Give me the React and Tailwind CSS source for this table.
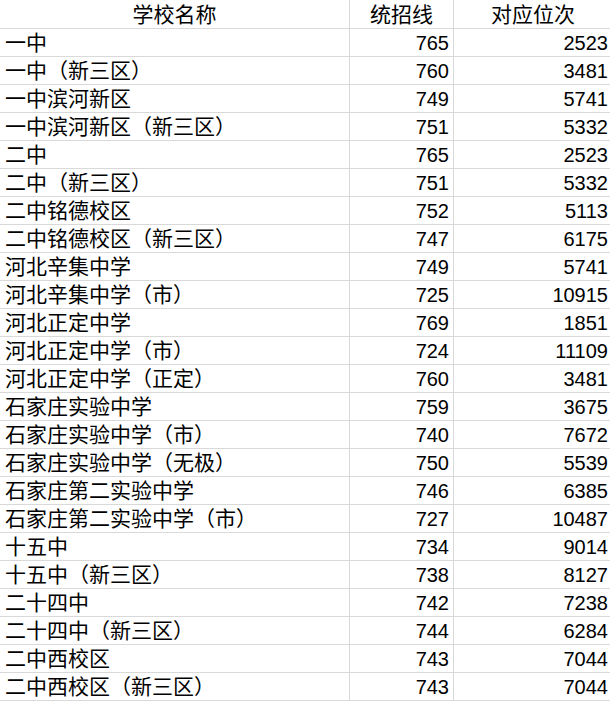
const rows = [
  ["一中", 765, 2523],
  ["一中（新三区）", 760, 3481],
  ["一中滨河新区", 749, 5741],
  ["一中滨河新区（新三区）", 751, 5332],
  ["二中", 765, 2523],
  ["二中（新三区）", 751, 5332],
  ["二中铭德校区", 752, 5113],
  ["二中铭德校区（新三区）", 747, 6175],
  ["河北辛集中学", 749, 5741],
  ["河北辛集中学（市）", 725, 10915],
  ["河北正定中学", 769, 1851],
  ["河北正定中学（市）", 724, 11109],
  ["河北正定中学（正定）", 760, 3481],
  ["石家庄实验中学", 759, 3675],
  ["石家庄实验中学（市）", 740, 7672],
  ["石家庄实验中学（无极）", 750, 5539],
  ["石家庄第二实验中学", 746, 6385],
  ["石家庄第二实验中学（市）", 727, 10487],
  ["十五中", 734, 9014],
  ["十五中（新三区）", 738, 8127],
  ["二十四中", 742, 7238],
  ["二十四中（新三区）", 744, 6284],
  ["二中西校区", 743, 7044],
  ["二中西校区（新三区）", 743, 7044],
];

export default function App() {
  return (
    <div className="w-[610px] h-[701px] overflow-hidden bg-white text-black text-[20px] leading-none font-['Liberation_Sans','Noto_Sans_CJK_SC',sans-serif]">
      <div className="grid grid-cols-[350px_104px_156px]">
        <div className="h-[29px] flex items-center justify-center text-[21px] border-r border-b border-[#d9d9d9]">学校名称</div>
        <div className="h-[29px] flex items-center justify-center text-[21px] border-r border-b border-[#d9d9d9]">统招线</div>
        <div className="h-[29px] flex items-center justify-center text-[21px] pl-[2px] border-b border-[#d9d9d9]">对应位次</div>
        {rows.map(([name, score, rank]) => (
          <div key={name} className="contents">
            <div className="h-[28px] flex items-center pl-[5px] text-[21px] border-r border-b border-[#d9d9d9] whitespace-nowrap">{name}</div>
            <div className="h-[28px] flex items-center justify-end pr-[4px] border-r border-b border-[#d9d9d9]">{score}</div>
            <div className="h-[28px] flex items-center justify-end pr-[2px] border-b border-[#d9d9d9]">{rank}</div>
          </div>
        ))}
      </div>
    </div>
  );
}
